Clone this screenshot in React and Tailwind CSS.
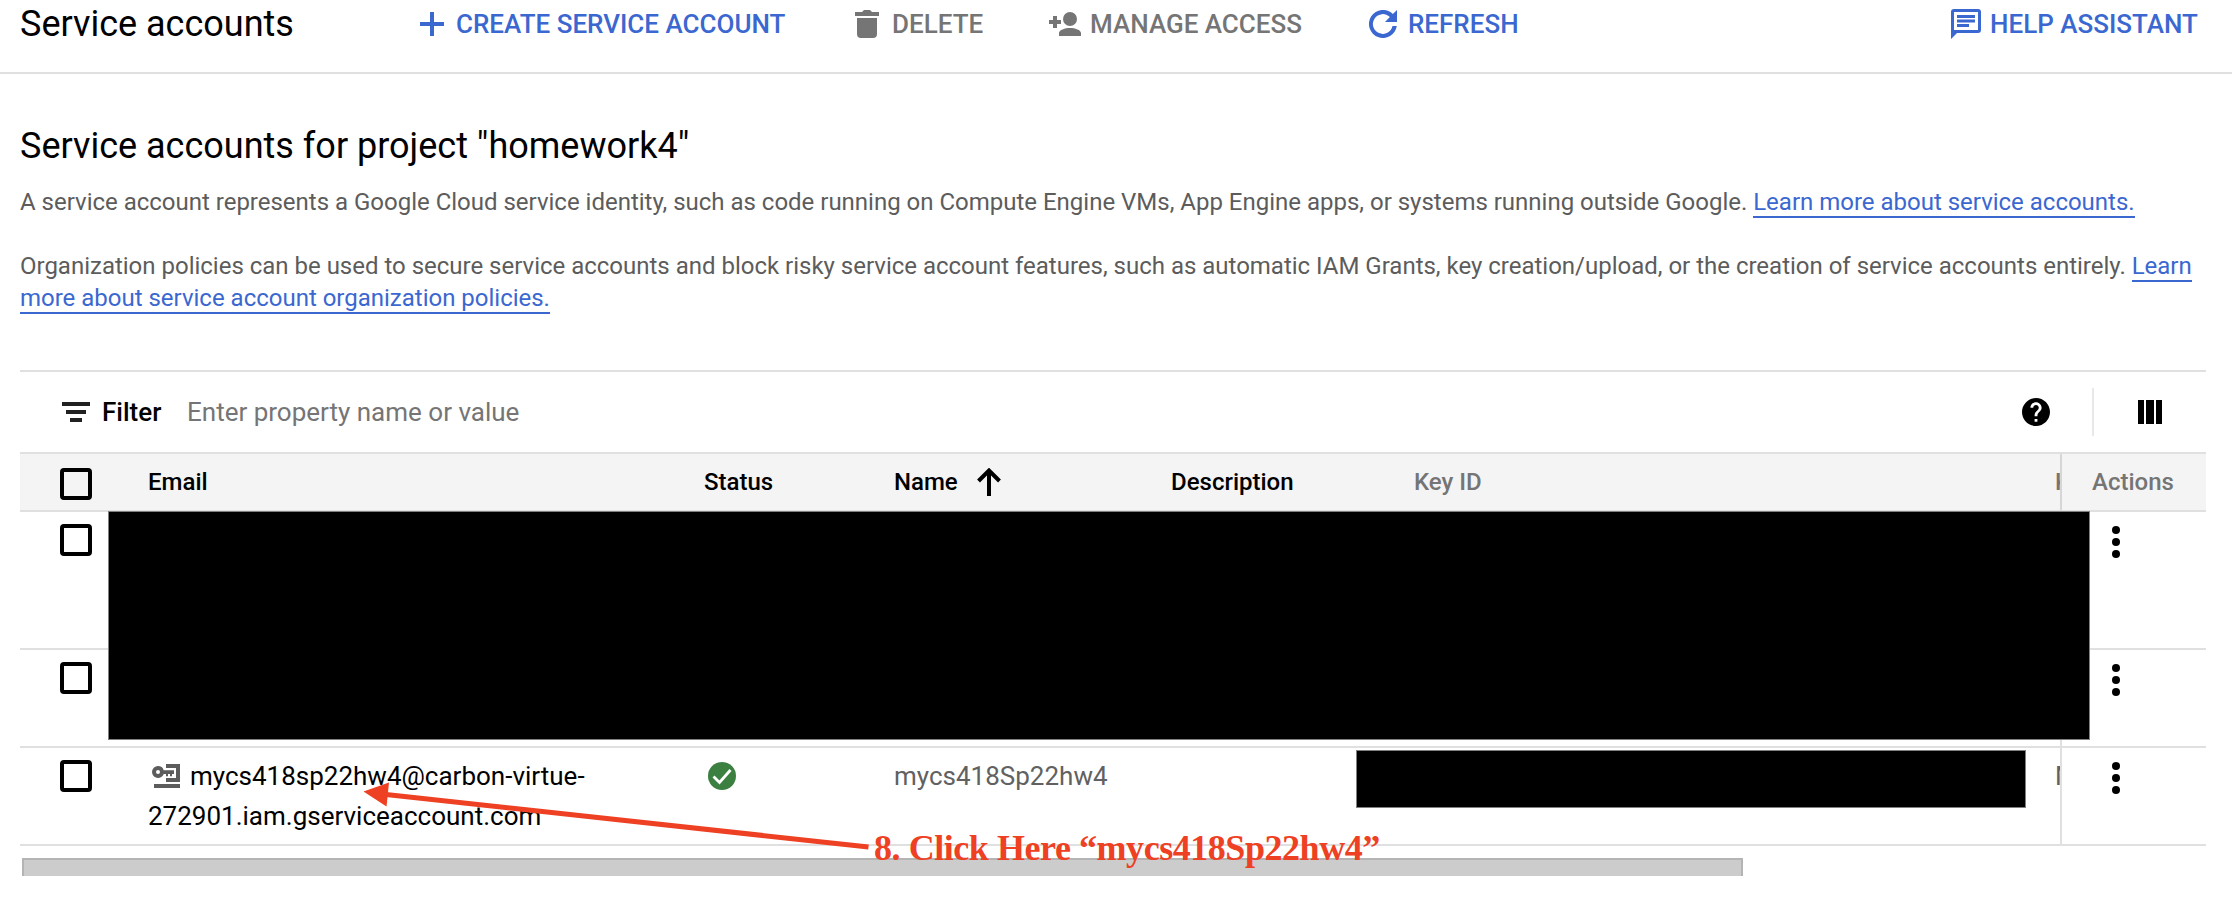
import React from "react";

const GRID = "grid grid-cols-[128px_556px_190px_277px_243px_641px_5px_146px]";

function Checkbox() {
  return <span className="block h-8 w-8 rounded-[4px] border-4 border-black" />;
}

function Dots() {
  return (
    <svg width="8" height="32" viewBox="0 0 8 32" className="block">
      <circle cx="4" cy="4" r="4" />
      <circle cx="4" cy="16" r="4" />
      <circle cx="4" cy="28" r="4" />
    </svg>
  );
}

function Row({ height, children }) {
  return (
    <div className={`${GRID} ${height} border-b-2 border-[#e0e0e0] text-[26px] leading-10`}>
      <div className="pt-3 pl-10"><Checkbox /></div>
      {children}
      <div className="col-start-8 border-l-2 border-[#e0e0e0] pt-3.5 pl-[50px]"><Dots /></div>
    </div>
  );
}

export default function App() {
  return (
    <div className="relative h-[914px] w-[2232px] overflow-hidden bg-white font-['Roboto',sans-serif] text-black">
      <header className="flex h-[74px] items-start border-b-2 border-[#e0e0e0] pl-5 text-[26px] font-medium leading-[48px] text-[#3b67d0]">
        <h1 className="w-[400px] text-[36px] font-normal text-black">Service accounts</h1>
        <button className="flex h-12 w-[435px] items-center whitespace-nowrap">
          <svg width="24" height="24" viewBox="0 0 24 24" className="mr-3 fill-current"><path d="M10 0h4v10h10v4H14v10h-4V14H0v-4h10z" /></svg>
          CREATE SERVICE ACCOUNT
        </button>
        <button className="flex h-12 w-[194px] items-center whitespace-nowrap text-[#757575]">
          <svg width="24" height="28" viewBox="0 0 24 28" className="mr-[13px] fill-current"><path d="M2 8h20v16a4 4 0 0 1-4 4H6a4 4 0 0 1-4-4zM0 2h7l2-2h6l2 2h7v4H0z" /></svg>
          DELETE
        </button>
        <button className="flex h-12 w-[320px] items-center whitespace-nowrap text-[#757575]">
          <svg width="32" height="24" viewBox="0 0 32 24" className="mr-[9px] fill-current"><circle cx="21" cy="7" r="7" /><path d="M10 24v-3c0-3 6-5 11-5s11 2 11 5v3zM4 4h4v4h4v4H8v4H4v-4H0V8h4z" /></svg>
          MANAGE ACCESS
        </button>
        <button className="flex h-12 w-[582px] items-center whitespace-nowrap">
          <svg width="28" height="28" viewBox="0 0 28 28" className="mr-[11px] fill-current"><path d="M28 0v12H16l4.900-4.900A9.900 9.900 0 1 0 23.500 16H27.800A14 14 0 1 1 23.900 4.100z" /></svg>
          REFRESH
        </button>
        <button className="flex h-12 items-center whitespace-nowrap">
          <svg width="30" height="30" viewBox="0 0 30 30" className="mr-[9px] fill-current"><path fillRule="evenodd" d="M3 0h24a3 3 0 0 1 3 3v18a3 3 0 0 1-3 3H6l-6 6V3a3 3 0 0 1 3-3zM3 3v18h24V3zM6 6h18v3H6zM6 10.500h18v3H6zM6 15h12v3H6z" /></svg>
          HELP ASSISTANT
        </button>
      </header>

      <main className="pt-12 pl-5">
        <h2 className="text-[36px] leading-[48px]">Service accounts for project "homework4"</h2>
        <p className="mt-4 w-[2186px] text-2xl leading-8 tracking-[-0.008px] whitespace-nowrap text-[#5c5c5c]">
          A service account represents a Google Cloud service identity, such as code running on Compute Engine VMs, App Engine apps, or systems running outside Google.{" "}
          <a className="border-b-2 border-[#3b67d0] text-[#3b67d0]">Learn more about service accounts.</a>
        </p>
        <p className="mt-8 w-[2186px] text-2xl leading-8 tracking-[-0.008px] whitespace-nowrap text-[#5c5c5c]">
          Organization policies can be used to secure service accounts and block risky service account features, such as automatic IAM Grants, key creation/upload, or the creation of service accounts entirely.{" "}
          <a className="border-b-2 border-[#3b67d0] text-[#3b67d0]">Learn<br />more about service account organization policies.</a>
        </p>

        <section className="mt-14 w-[2186px] border-t-2 border-[#e0e0e0]">
          <div className="flex h-20 items-center text-[26px]">
            <svg width="28" height="20" viewBox="0 0 28 20" className="ml-[42px] fill-[#212121]"><path d="M0 0h28v4H0zM4 8h20v4H4zM8 16h12v4H8z" /></svg>
            <span className="ml-3 w-[85px] font-medium">Filter</span>
            <span className="text-[#757575]">Enter property name or value</span>
            <svg width="28" height="28" viewBox="2 2 20 20" className="ml-auto"><path d="M12 2C6.480 2 2 6.480 2 12s4.480 10 10 10 10-4.480 10-10S17.520 2 12 2zm1 17h-2v-2h2v2zm2.070-7.750l-.9.920C13.450 12.900 13 13.500 13 15h-2v-.5c0-1.100.45-2.100 1.170-2.830l1.240-1.260c.37-.36.590-.86.590-1.410 0-1.100-.9-2-2-2s-2 .9-2 2H8c0-2.210 1.790-4 4-4s4 1.790 4 4c0 .88-.36 1.680-.93 2.250z" /></svg>
            <span className="ml-[42px] h-12 w-0.5 bg-[#e8e8e8]" />
            <svg width="24" height="24" viewBox="0 0 24 24" className="mr-11 ml-11"><path d="M0 0h6v24H0zM8 0h8v24H8zM18 0h6v24h-6z" /></svg>
          </div>

          <div className={`${GRID} h-[60px] border-y-2 border-[#e0e0e0] bg-[#f4f4f4] text-2xl leading-[56px] font-medium`}>
            <div className="pt-3.5 pl-10"><Checkbox /></div>
            <div>Email</div>
            <div>Status</div>
            <div className="flex items-center">
              Name
              <svg width="24" height="28" viewBox="0 0 24 28" className="ml-[19px]" fill="none" stroke="#000" strokeWidth="4"><path d="M12 28V3M1.500 13L12 2.500 22.500 13" /></svg>
            </div>
            <div>Description</div>
            <div className="text-[#757575]">Key ID</div>
            <div className="overflow-hidden text-[#757575]">K</div>
            <div className="border-l-2 border-[#d6d6d6] pl-[30px] text-[#757575]">Actions</div>
          </div>

          <Row height="h-[138px]" />
          <Row height="h-[98px]" />
          <Row height="h-[98px]">
            <div className="pt-2 whitespace-nowrap">
              <svg width="28" height="24" viewBox="0 0 28 24" className="mr-2.5 ml-1 inline-block align-[-3px]"><path fill="#5c5c5c" fillRule="evenodd" d="M6 2a6 6 0 0 1 5.700 4.200H22v3.800h-2v2.300h-2V10h-2v2.300h-2V10h-2.300A6 6 0 1 1 6 2zm0 4a2 2 0 1 0 0 4 2 2 0 0 0 0-4zM14 0h14v18H14v-4h10V4H14zM2 20h26v4H2z" /></svg>
              mycs418sp22hw4@carbon-virtue-<br />272901.iam.gserviceaccount.com
            </div>
            <div className="pt-3.5 pl-1">
              <svg width="28" height="28" viewBox="0 0 28 28"><circle cx="14" cy="14" r="14" fill="#3b8040" /><path d="M5.500 14.500l6 6L22.500 8" fill="none" stroke="#fff" strokeWidth="2.800" /></svg>
            </div>
            <div className="pt-2 text-[#616161]">mycs418Sp22hw4</div>
            <div />
            <div />
            <div className="overflow-hidden pt-2 text-[#616161]">M</div>
          </Row>
          <div className="mt-3 ml-0.5 h-[18px] w-[1721px] border-2 border-b-0 border-[#b4b4b4] bg-[#ccc]" />
        </section>
      </main>

      <div className="absolute top-[511px] left-[108px] h-[229px] w-[1982px] border border-[#808080] bg-black" />
      <div className="absolute top-[750px] left-[1356px] h-[58px] w-[670px] border border-[#808080] bg-black" />
      <svg className="absolute top-[770px] left-[350px]" width="530" height="90" viewBox="350 770 530 90">
        <path d="M386 794.500L868.500 847" stroke="#ee4023" strokeWidth="5" />
        <path d="M363.500 791.500L389 782.500L386.500 806.500Z" fill="#ee4023" />
      </svg>
      <div className="absolute top-[828px] left-[874px] font-['Liberation_Serif',serif] text-[36px] leading-10 font-bold tracking-[-0.45px] whitespace-nowrap text-[#ee4023]">8. Click Here “mycs418Sp22hw4”</div>
    </div>
  );
}
